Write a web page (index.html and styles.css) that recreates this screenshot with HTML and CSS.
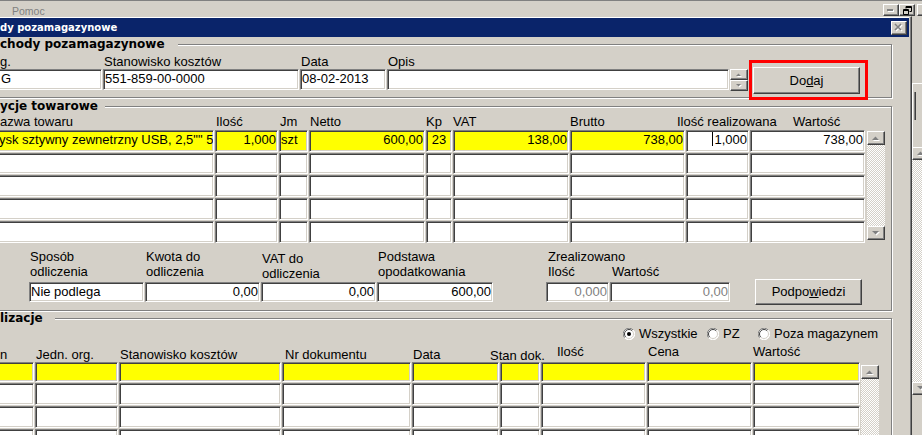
FILE: index.html
```html
<!DOCTYPE html>
<html lang="pl">
<head>
<meta charset="utf-8">
<title>Rozchody pozamagazynowe</title>
<link rel="stylesheet" href="styles.css">
</head>
<body>
<div class="menubar">
  <span class="menu-item">Pomoc</span>
  <div class="mdi-buttons">
    <span class="btn mdi-btn"><svg width="8" height="3" viewBox="0 0 8 3"><rect x="1" y="1" width="6" height="2" fill="#fff"/><rect x="0" y="0" width="6" height="2" fill="#808080"/></svg></span>
    <span class="btn mdi-btn"><svg width="9" height="9" viewBox="0 0 9 9"><path d="M3 0.5h5.5v5h-2M3 1.5h5.5M3 0.5v2" fill="none" stroke="#000"/><path d="M0.5 3.5h5v5h-5z M0.5 4.5h5" fill="none" stroke="#000"/></svg></span>
    <span class="btn mdi-btn mdi-next"></span>
  </div>
</div>
<div class="desk">
  <div class="window">
    <div class="titlebar">
      <span class="title">dy pozamagazynowe</span>
      <span class="btn caption-btn"><svg width="10" height="9" viewBox="0 0 10 9"><path d="M2 2l6 6M8 2l-6 6" stroke="#fff" stroke-width="1.6"/><path d="M1 1l6 6M7 1l-6 6" stroke="#808080" stroke-width="1.6"/></svg></span>
    </div>
    <div class="client">
      <div class="group g1">
        <div class="group-title">chody pozamagazynowe</div>
        <div class="g1-row">
          <div class="field f-org"><div class="lbl">g.</div><div class="edit">G</div></div>
          <div class="field f-stan"><div class="lbl">Stanowisko kosztów</div><div class="edit">551-859-00-0000</div></div>
          <div class="field f-data"><div class="lbl">Data</div><div class="edit">08-02-2013</div></div>
          <div class="field f-opis"><div class="lbl">Opis</div><div class="edit"></div></div>
          <div class="spin">
            <span class="btn spin-btn"><svg width="6" height="4" viewBox="0 0 6 4"><path d="M1 4h5L3.5 1.5z" fill="#fff"/><path d="M0 3h5L2.5 0.5z" fill="#808080"/></svg></span>
            <span class="btn spin-btn"><svg width="6" height="4" viewBox="0 0 6 4"><path d="M1 1h5L3.5 3.5z" fill="#fff"/><path d="M0 0h5L2.5 2.5z" fill="#808080"/></svg></span>
          </div>
          <div class="btn push dodaj">Do<u>d</u>aj</div>
        </div>
      </div>

      <div class="group g2">
        <div class="group-title">ycje towarowe</div>
        <div class="cols2 grid-head">
          <span class="h-first">azwa towaru</span><span>Ilość</span><span class="h-jm">Jm</span><span>Netto</span><span class="h-kp">Kp</span><span class="h-kp">VAT</span><span class="h-kp">Brutto</span><span class="h-ilr">Ilość realizowana</span><span class="h-wart">Wartość</span>
        </div>
        <div class="grid-wrap">
          <div class="cols2 grid-body rows2">
            <div class="cell yel first">ysk sztywny zewnetrzny USB, 2,5"" 5</div><div class="cell yel r">1,000</div><div class="cell yel">szt</div><div class="cell yel r">600,00</div><div class="cell yel c">23</div><div class="cell yel r">138,00</div><div class="cell yel r">738,00</div><div class="cell r"><span class="caret"></span>1,000</div><div class="cell r">738,00</div>
            <div class="cell"></div><div class="cell"></div><div class="cell"></div><div class="cell"></div><div class="cell"></div><div class="cell"></div><div class="cell"></div><div class="cell"></div><div class="cell"></div>
            <div class="cell"></div><div class="cell"></div><div class="cell"></div><div class="cell"></div><div class="cell"></div><div class="cell"></div><div class="cell"></div><div class="cell"></div><div class="cell"></div>
            <div class="cell"></div><div class="cell"></div><div class="cell"></div><div class="cell"></div><div class="cell"></div><div class="cell"></div><div class="cell"></div><div class="cell"></div><div class="cell"></div>
            <div class="cell"></div><div class="cell"></div><div class="cell"></div><div class="cell"></div><div class="cell"></div><div class="cell"></div><div class="cell"></div><div class="cell"></div><div class="cell"></div>
          </div>
          <div class="vscroll vs2">
            <span class="btn sb-btn"><svg width="8" height="5" viewBox="0 0 8 5"><path d="M1 5h7L4.5 1.5z" fill="#fff"/><path d="M0 4h7L3.5 0.5z" fill="#808080"/></svg></span>
            <span class="sb-track"></span>
            <span class="btn sb-btn"><svg width="8" height="5" viewBox="0 0 8 5"><path d="M1 1h7L4.5 4.5z" fill="#fff"/><path d="M0 0h7L3.5 3.5z" fill="#808080"/></svg></span>
          </div>
        </div>
        <div class="summary">
          <div class="sfield s-w115"><div class="slabel">Sposób<br>odliczenia</div><div class="edit">Nie podlega</div></div>
          <div class="sfield s-w115"><div class="slabel">Kwota do<br>odliczenia</div><div class="edit r">0,00</div></div>
          <div class="sfield s-w115"><div class="slabel slabel-low">VAT do<br>odliczenia</div><div class="edit r">0,00</div></div>
          <div class="sfield s-w116"><div class="slabel">Podstawa<br>opodatkowania</div><div class="edit r">600,00</div></div>
          <div class="zreal">
            <div class="zreal-title">Zrealizowano</div>
            <div class="zreal-row">
              <div class="sfield s-w63"><div class="zlabel">Ilość</div><div class="edit r dis">0,000</div></div>
              <div class="sfield s-w120"><div class="zlabel">Wartość</div><div class="edit r dis">0,00</div></div>
            </div>
          </div>
          <div class="btn push podp">Podpo<u>w</u>iedzi</div>
        </div>
      </div>

      <div class="group g3">
        <div class="group-title">lizacje</div>
        <div class="radios">
          <span class="radio r-w84"><svg width="12" height="12" viewBox="0 0 12 12"><circle cx="6" cy="6" r="5.5" fill="#fff"/><path d="M10.3 2.1A5.5 5.5 0 0 0 1.7 9.9" fill="none" stroke="#808080"/><path d="M1.7 9.9A5.5 5.5 0 0 0 10.3 2.1" fill="none" stroke="#fff"/><path d="M9.2 2.8A4.5 4.5 0 0 0 2.8 9.2" fill="none" stroke="#404040"/><path d="M2.8 9.2A4.5 4.5 0 0 0 9.2 2.8" fill="none" stroke="#d4d0c8"/><circle cx="6" cy="6" r="2" fill="#000"/></svg>Wszystkie</span>
          <span class="radio r-w51"><svg width="12" height="12" viewBox="0 0 12 12"><circle cx="6" cy="6" r="5.5" fill="#fff"/><path d="M10.3 2.1A5.5 5.5 0 0 0 1.7 9.9" fill="none" stroke="#808080"/><path d="M1.7 9.9A5.5 5.5 0 0 0 10.3 2.1" fill="none" stroke="#fff"/><path d="M9.2 2.8A4.5 4.5 0 0 0 2.8 9.2" fill="none" stroke="#404040"/><path d="M2.8 9.2A4.5 4.5 0 0 0 9.2 2.8" fill="none" stroke="#d4d0c8"/></svg>PZ</span>
          <span class="radio"><svg width="12" height="12" viewBox="0 0 12 12"><circle cx="6" cy="6" r="5.5" fill="#fff"/><path d="M10.3 2.1A5.5 5.5 0 0 0 1.7 9.9" fill="none" stroke="#808080"/><path d="M1.7 9.9A5.5 5.5 0 0 0 10.3 2.1" fill="none" stroke="#fff"/><path d="M9.2 2.8A4.5 4.5 0 0 0 2.8 9.2" fill="none" stroke="#404040"/><path d="M2.8 9.2A4.5 4.5 0 0 0 9.2 2.8" fill="none" stroke="#d4d0c8"/></svg>Poza magazynem</span>
        </div>
        <div class="cols3 grid-head3">
          <span class="h-first">n</span><span>Jedn. org.</span><span>Stanowisko kosztów</span><span class="h-nr">Nr dokumentu</span><span>Data</span><span class="h-stan">Stan dok.</span><span class="h-il3">Ilość</span><span class="h-up">Cena</span><span class="h-up h-w3">Wartość</span>
        </div>
        <div class="grid-wrap">
          <div class="cols3 grid-body rows3">
            <div class="cell yel"></div><div class="cell yel"></div><div class="cell yel"></div><div class="cell yel"></div><div class="cell yel"></div><div class="cell yel"></div><div class="cell yel"></div><div class="cell yel"></div><div class="cell yel"></div>
            <div class="cell"></div><div class="cell"></div><div class="cell"></div><div class="cell"></div><div class="cell"></div><div class="cell"></div><div class="cell"></div><div class="cell"></div><div class="cell"></div>
            <div class="cell"></div><div class="cell"></div><div class="cell"></div><div class="cell"></div><div class="cell"></div><div class="cell"></div><div class="cell"></div><div class="cell"></div><div class="cell"></div>
            <div class="cell"></div><div class="cell"></div><div class="cell"></div><div class="cell"></div><div class="cell"></div><div class="cell"></div><div class="cell"></div><div class="cell"></div><div class="cell"></div>
          </div>
          <div class="vscroll vs3">
            <span class="btn sb-btn"><svg width="8" height="5" viewBox="0 0 8 5"><path d="M1 5h7L4.5 1.5z" fill="#fff"/><path d="M0 4h7L3.5 0.5z" fill="#808080"/></svg></span>
            <span class="sb-track"></span>
          </div>
        </div>
      </div>
    </div>
  </div>
  <div class="side">
    <div class="side-box"><div class="side-edit"></div></div>
    <span class="btn side-btn"><svg width="8" height="5" viewBox="0 0 8 5"><path d="M1 5h7L4.5 1.5z" fill="#fff"/><path d="M0 4h7L3.5 0.5z" fill="#808080"/></svg></span>
    <span class="sb-track side-track"></span>
    <span class="btn side-btn"><svg width="8" height="5" viewBox="0 0 8 5"><path d="M1 1h7L4.5 4.5z" fill="#fff"/><path d="M0 0h7L3.5 3.5z" fill="#808080"/></svg></span>
  </div>
</div>
<div class="highlight"></div>
</body>
</html>
```

FILE: styles.css
```css
* { box-sizing: border-box; }
html, body { margin: 0; padding: 0; }
body {
  width: 922px; height: 435px; overflow: hidden; position: relative;
  background: #d4d0c8; color: #000;
  font-family: "Liberation Sans", Arial, sans-serif; font-size: 13px; line-height: 15px;
}

/* classic 3D pieces */
.btn {
  display: flex; align-items: center; justify-content: center;
  background: #d4d0c8;
  border: 1px solid; border-color: #fff #404040 #404040 #fff;
  box-shadow: inset -1px -1px 0 #808080;
}
.edit, .cell {
  background: #fff;
  border: 1px solid; border-color: #808080 #fff #fff #808080;
  box-shadow: inset 1px 1px 0 #404040, inset -1px -1px 0 #d4d0c8;
  padding: 1px 1px 0; line-height: 15px;
  white-space: nowrap; overflow: hidden;
}
.r { text-align: right; }
.c { text-align: center; }
.yel { background: #ffff00; }
.dis { color: #808080; }

/* menu bar */
.menubar { height: 16px; border-top: 1px solid #808080; display: flex; align-items: flex-start; }
.menu-item { margin: 5px 0 0 12px; font-size: 10.5px; line-height: 11px; color: #808080; }
.mdi-buttons { margin: 3px -11px 0 auto; display: flex; }
.mdi-btn { width: 16px; height: 12px; }
.mdi-next { margin-left: 2px; }

/* desktop */
.desk { display: flex; height: 419px; overflow: hidden; }
.window {
  width: 912px; flex: none; overflow: hidden;
  border-top: 1px solid #d4d0c8; border-right: 1px solid #404040;
  box-shadow: inset -1px 0 0 #808080; padding-right: 2px;
}
.titlebar {
  height: 20px; border-top: 1px solid #fff; background: #0a246a;
  display: flex; align-items: center; color: #fff;
}
.title { font: bold 10px/12px "DejaVu Sans", sans-serif; white-space: nowrap; }
.caption-btn { width: 16px; height: 14px; margin: 0 2px 0 auto; }

/* group boxes */
.group {
  border: 1px solid #808080;
  box-shadow: inset 1px 1px 0 #fff, 1px 1px 0 #fff;
  margin: 0 17px 0 -8px;
}
.group-title {
  margin: -7px 0 0 7px; height: 13px; background: #d4d0c8;
  font: bold 12px/13px "DejaVu Sans", sans-serif; white-space: nowrap;
}
.g1 { margin-top: 7px; }
.g1 .group-title { width: 178px; }
.g2 { margin-top: 8px; }
.g2 .group-title { width: 105px; }
.g3 { margin-top: 7px; height: 130px; }
.g3 .group-title { width: 55px; }

/* group 1 */
.g1-row { display: flex; align-items: flex-start; gap: 1px; padding: 3px 0; }
.lbl { height: 15px; padding-left: 1px; white-space: nowrap; }
.f-org .lbl { padding-left: 7px; }
.field .edit { height: 21px; }
.f-org { width: 109px; }
.f-org .edit { padding-left: 7px; }
.f-stan { width: 196px; }
.f-data { width: 86px; }
.f-opis { width: 342px; }
.spin { width: 18px; margin-top: 15px; display: flex; flex-direction: column; }
.spin-btn { height: 11px; }
.push { line-height: 23px; }
.dodaj { width: 107px; height: 27px; margin: 13px 0 0 4px; }

/* grids */
.cols2 { display: grid; grid-template-columns: 221px 63px 29px 116px 26px 116px 115px 63px 115px; column-gap: 1px; }
.cols3 { display: grid; grid-template-columns: 41px 83px 162px 129px 87px 40px 105px 105px 107px; column-gap: 1px; }
.grid-head, .grid-head3 { height: 17px; padding-top: 1px; white-space: nowrap; }
.grid-head span, .grid-head3 span { padding-left: 1px; }
.grid-head .h-first, .grid-head3 .h-first { padding-left: 7px; }
.h-jm { padding-left: 2px; }
.grid-head .h-kp { padding-left: 0; }
.h-ilr { margin-left: -10px; }
.h-wart { margin-left: 42px; }
.grid-body { row-gap: 1px; }
.rows2 { grid-template-rows: 22px 21px 22px 22px 22px; }
.rows3 { grid-template-rows: 20px 22px 22px 22px; }
.cell.first { padding-left: 5px; }
.caret { display: inline-block; width: 1px; height: 14px; background: #000; vertical-align: -2px; margin-right: 1px; }

.grid-wrap { display: flex; align-items: flex-start; }
.vscroll { display: flex; flex-direction: column; width: 18px; }
.vs2 { margin: 1px 0 0 2px; height: 109px; }
.vs3 { margin: 3px 0 0 1px; height: 80px; }
.sb-btn { height: 14px; flex: none; }
.sb-track {
  flex: 1;
  background-color: #fff;
  background-image: repeating-conic-gradient(#d4d0c8 0 25%, #fff 0 50%);
  background-size: 2px 2px;
}

/* summary */
.summary { display: flex; align-items: flex-start; gap: 1px; margin: 6px 0 0 36px; padding-bottom: 5px; }
.sfield .edit { height: 20px; }
.s-w115 { width: 115px; }
.s-w116 { width: 116px; }
.s-w63 { width: 63px; }
.s-w120 { width: 120px; }
.slabel { height: 33px; padding-left: 1px; white-space: nowrap; }
.slabel-low { padding-top: 2px; }
.zreal { margin-left: 52px; }
.zreal-title { height: 15px; padding-left: 2px; }
.zreal-row { display: flex; gap: 1px; }
.zlabel { height: 18px; padding-left: 2px; }
.podp { width: 107px; height: 26px; margin: 30px 0 0 24px; line-height: 22px; }

/* group 3 */
.radios { display: flex; align-items: center; margin: 1px 0 0 630px; height: 15px; white-space: nowrap; }
.radio { display: flex; align-items: center; gap: 4px; }
.r-w84 { width: 84px; }
.r-w51 { width: 51px; }
.grid-head3 { margin-top: 6px; height: 15px; padding-top: 0; }
.h-nr { padding-left: 3px !important; }
.h-stan { margin-left: -11px; margin-top: 1px; }
.h-il3 { padding-left: 16px !important; margin-top: -3px; }
.h-up { margin-top: -3px; }
.h-w3 { padding-left: 0 !important; }

/* right strip */
.side { flex: 1; display: flex; flex-direction: column; }
.side-box {
  flex: none; height: 64px; margin-top: 67px;
  border-top: 1px solid #fff; border-left: 1px solid #fff;
  padding: 8px 0 0 1px;
}
.side-edit { height: 28px; border-left: 1px solid #808080; box-shadow: inset 1px 0 0 #404040; }
.side-btn { height: 13px; width: 18px; flex: none; }
.side-track { flex: none; height: 222px; }

/* annotation */
.highlight {
  position: absolute; left: 749px; top: 60px; width: 119px; height: 40px;
  border: 3px solid #ff0000;
}
```
